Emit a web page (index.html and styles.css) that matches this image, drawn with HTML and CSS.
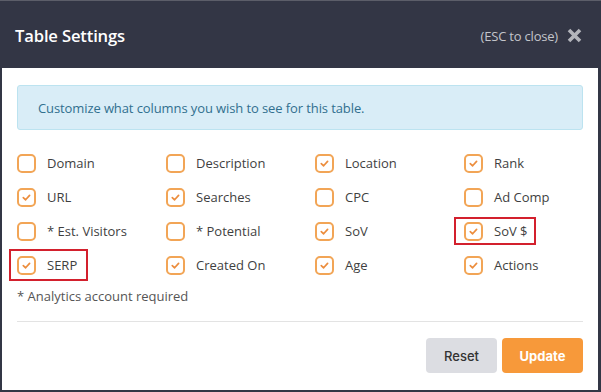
FILE: index.html
```html
<!DOCTYPE html>
<html>
<head>
<meta charset="utf-8">
<link rel="stylesheet" href="styles.css">
</head>
<body>
<div class="modal">
  <div class="header">
    <h1 class="title">Table Settings</h1>
    <div class="close">
      <span class="esc">(ESC to close)</span>
      <svg class="x" width="15" height="15" viewBox="0 0 15 15"><path d="M2 2 L13 13 M13 2 L2 13" stroke="#b3b5bb" stroke-width="3.6" stroke-linecap="butt"/></svg>
    </div>
  </div>
  <div class="content">
    <div class="info">Customize what columns you wish to see for this table.</div>
    <div class="grid">
      <label class="item"><span class="cb"></span>Domain</label>
      <label class="item"><span class="cb"></span>Description</label>
      <label class="item"><span class="cb on"><svg viewBox="0 0 15 15"><path d="M4.3 7.6 L6.6 9.8 L10.6 5.4"/></svg></span>Location</label>
      <label class="item"><span class="cb on"><svg viewBox="0 0 15 15"><path d="M4.3 7.6 L6.6 9.8 L10.6 5.4"/></svg></span>Rank</label>

      <label class="item"><span class="cb on"><svg viewBox="0 0 15 15"><path d="M4.3 7.6 L6.6 9.8 L10.6 5.4"/></svg></span>URL</label>
      <label class="item"><span class="cb on"><svg viewBox="0 0 15 15"><path d="M4.3 7.6 L6.6 9.8 L10.6 5.4"/></svg></span>Searches</label>
      <label class="item"><span class="cb"></span>CPC</label>
      <label class="item"><span class="cb"></span>Ad Comp</label>

      <label class="item"><span class="cb"></span>* Est. Visitors</label>
      <label class="item"><span class="cb"></span>* Potential</label>
      <label class="item"><span class="cb on"><svg viewBox="0 0 15 15"><path d="M4.3 7.6 L6.6 9.8 L10.6 5.4"/></svg></span>SoV</label>
      <label class="item"><span class="hl hl-sov"></span><span class="cb on"><svg viewBox="0 0 15 15"><path d="M4.3 7.6 L6.6 9.8 L10.6 5.4"/></svg></span>SoV $</label>

      <label class="item"><span class="hl hl-serp"></span><span class="cb on"><svg viewBox="0 0 15 15"><path d="M4.3 7.6 L6.6 9.8 L10.6 5.4"/></svg></span>SERP</label>
      <label class="item"><span class="cb on"><svg viewBox="0 0 15 15"><path d="M4.3 7.6 L6.6 9.8 L10.6 5.4"/></svg></span>Created On</label>
      <label class="item"><span class="cb on"><svg viewBox="0 0 15 15"><path d="M4.3 7.6 L6.6 9.8 L10.6 5.4"/></svg></span>Age</label>
      <label class="item"><span class="cb on"><svg viewBox="0 0 15 15"><path d="M4.3 7.6 L6.6 9.8 L10.6 5.4"/></svg></span>Actions</label>
    </div>
    <p class="note">* Analytics account required</p>
    <hr class="rule">
    <div class="actions">
      <button class="btn reset">Reset</button>
      <button class="btn update">Update</button>
    </div>
  </div>
</div>
</body>
</html>
```
FILE: styles.css
```css
html, body {
  margin: 0;
  padding: 0;
}
body {
  background: #333645;
  width: 601px;
  height: 392px;
  overflow: hidden;
  font-family: "Open Sans", sans-serif;
}
.modal {
  border-top: 1px solid #5c5e69;
  height: 391px;
  display: flex;
  flex-direction: column;
}
.header {
  height: 67px;
  box-sizing: border-box;
  display: flex;
  align-items: center;
  justify-content: space-between;
  padding: 2px 19px 0 15px;
}
.title {
  margin: 0;
  color: #ffffff;
  font-size: 16.6px;
  font-weight: 600;
  letter-spacing: -0.15px;
}
.close {
  display: flex;
  align-items: center;
  gap: 9px;
}
.esc {
  color: #c3c5cb;
  font-size: 13px;
  letter-spacing: -0.2px;
}
.x {
  display: block;
}
.content {
  flex: 1;
  background: #ffffff;
  margin: 0 3px 2px 2px;
  padding: 17px 15px 0 15px;
}
.info {
  height: 45px;
  box-sizing: border-box;
  background: #d9edf7;
  border: 1px solid #bce3f0;
  border-radius: 3px;
  color: #31708f;
  font-size: 13px;
  letter-spacing: -0.1px;
  display: flex;
  align-items: center;
  padding-left: 20px;
}
.grid {
  margin-top: 16px;
  display: grid;
  grid-template-columns: repeat(4, 149px);
  grid-auto-rows: 34px;
}
.item {
  position: relative;
  display: flex;
  align-items: center;
  gap: 11px;
  font-size: 13px;
  color: #3f3f3f;
}
.cb {
  width: 19px;
  height: 19px;
  box-sizing: border-box;
  border: 2px solid #f2a556;
  border-radius: 5px;
  display: flex;
  align-items: center;
  justify-content: center;
  flex: none;
}
.cb svg {
  width: 15px;
  height: 15px;
  fill: none;
  stroke: #ec8d3d;
  stroke-width: 1.7;
  stroke-linecap: round;
  stroke-linejoin: round;
}
.hl {
  position: absolute;
  border: 2px solid #d3202d;
  box-sizing: border-box;
}
.hl-serp {
  left: -8px;
  top: 1px;
  width: 79px;
  height: 32px;
}
.hl-sov {
  left: -10px;
  top: 3px;
  width: 82px;
  height: 28px;
}
.note {
  margin: 5px 0 0 0;
  font-size: 13px;
  line-height: 18px;
  color: #555555;
}
.rule {
  margin: 16px 0 0 0;
  border: 0;
  border-top: 1px solid #e3e3e3;
}
.actions {
  margin-top: 16px;
  display: flex;
  justify-content: flex-end;
  gap: 5px;
}
.btn {
  height: 35px;
  border: 0;
  border-radius: 4px;
  font-family: "Inter", sans-serif;
  font-size: 13px;
}
.reset {
  width: 71px;
  background: #dcdde2;
  color: #333333;
  font-weight: 500;
}
.update {
  width: 81px;
  background: #f7993a;
  color: #ffffff;
  font-weight: 700;
}
```
